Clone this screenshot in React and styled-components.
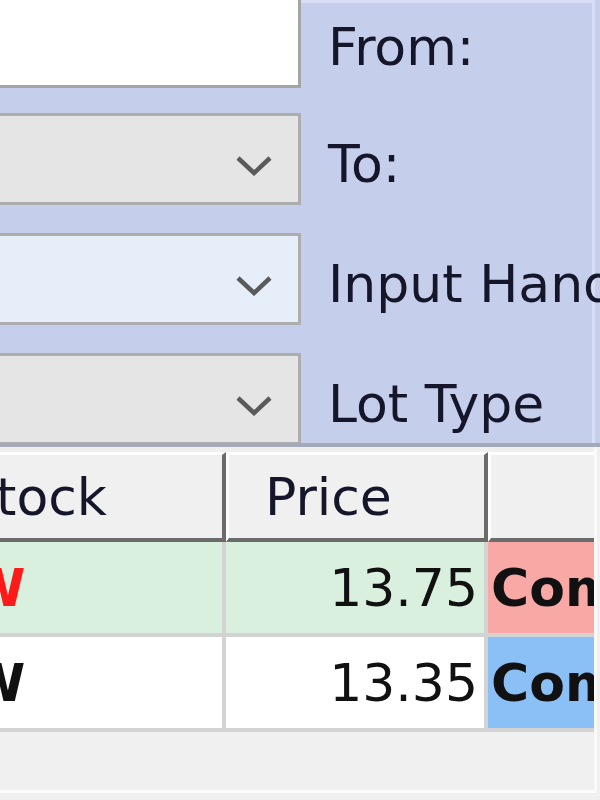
import React from "react"
import styled, { createGlobalStyle } from "styled-components"

const GlobalStyle = createGlobalStyle`
  html, body {
    margin: 0;
    padding: 0;
    background: #f0f0f0;
  }
  body {
    font-family: "DejaVu Sans", Tahoma, sans-serif;
  }
`

const Screen = styled.div`
  width: 600px;
  height: 800px;
  overflow: hidden;
  background: #f0f0f0;
`

const FilterPanel = styled.div`
  height: 443px;
  background: #c5cfec;
  border-bottom: 4px solid #a4a9ba;
  padding-right: 5px;
  overflow: hidden;
`

const FilterGroup = styled.div`
  height: 100%;
  box-sizing: border-box;
  border-top: 3px solid #d7def6;
  border-right: 3px solid #d7def6;
  display: flex;
  flex-direction: column;
  gap: 28px;
  & > :first-child {
    margin-top: -7px;
    margin-bottom: -3px;
  }
`

const FormRow = styled.div`
  display: flex;
  align-items: center;
  height: 92px;
  flex-shrink: 0;
`

const FieldBox = styled.div`
  box-sizing: border-box;
  width: 311px;
  height: 92px;
  margin-left: -10px;
  flex-shrink: 0;
  background: ${(p) => p.$bg || "#e5e5e5"};
  border: 3px solid ${(p) => p.$line || "#adadad"};
  display: flex;
  align-items: center;
  justify-content: flex-end;
  padding-right: 26px;
`

const Chevron = styled.svg`
  width: 36px;
  height: 20px;
  margin-top: 14px;
`

const FieldLabel = styled.div`
  margin-left: 27px;
  padding-top: 10px;
  font-size: 52px;
  color: #16162a;
  white-space: nowrap;
`

const GridView = styled.div`
  box-sizing: border-box;
  height: 346px;
  margin-right: 3px;
  padding-top: 5px;
  border-right: 3px solid #f9f9f9;
  border-bottom: 3px solid #fbfbfb;
  overflow: hidden;
`

const GridTable = styled.div`
  display: grid;
  grid-template-columns: 302px 262px 220px;
  margin-left: -76px;
  width: max-content;
`

const HeaderCell = styled.div`
  box-sizing: border-box;
  height: 90px;
  background: #f0f0f0;
  border-top: 3px solid #ffffff;
  border-left: 3px solid #ffffff;
  border-right: 4px solid #6b6b6b;
  border-bottom: 4px solid #6b6b6b;
  padding-left: 36px;
  display: flex;
  align-items: center;
  font-size: 52px;
  color: #16162a;
  white-space: nowrap;
`

const DataCell = styled.div`
  box-sizing: border-box;
  height: 95px;
  background: ${(p) => p.$bg || "#ffffff"};
  border-right: 4px solid #d3d3d3;
  border-bottom: 4px solid #d3d3d3;
  display: flex;
  align-items: center;
  justify-content: ${(p) => (p.$right ? "flex-end" : "flex-start")};
  padding: ${(p) => (p.$right ? "0 6px 0 0" : `0 0 0 ${p.$pad ?? 44}px`)};
  font-size: 52px;
  font-weight: ${(p) => (p.$bold ? 700 : 400)};
  color: ${(p) => p.$color || "#111111"};
  white-space: nowrap;
  overflow: hidden;
`

const fields = [
  { label: "From:", bg: "#ffffff", line: "#a5a5a5", combo: false },
  { label: "To:", bg: "#e5e5e5", combo: true },
  { label: "Input Handler:", bg: "#e6eefa", combo: true },
  { label: "Lot Type", bg: "#e5e5e5", combo: true },
]

const rows = [
  { stock: "W", stockColor: "#ff1a1a", price: "13.75", type: "Common", rowBg: "#d9f0de", typeBg: "#f8a9a6" },
  { stock: "W", stockColor: "#111111", price: "13.35", type: "Common", rowBg: "#ffffff", typeBg: "#8bc0f7" },
]

const App = () => (
  <Screen>
    <GlobalStyle />
    <FilterPanel>
      <FilterGroup>
        {fields.map((f) => (
          <FormRow key={f.label}>
            <FieldBox $bg={f.bg} $line={f.line}>
              {f.combo && (
                <Chevron viewBox="0 0 36 20">
                  <polyline points="2,2 18,17 34,2" fill="none" stroke="#5a5a5a" strokeWidth="4.5" />
                </Chevron>
              )}
            </FieldBox>
            <FieldLabel>{f.label}</FieldLabel>
          </FormRow>
        ))}
      </FilterGroup>
    </FilterPanel>
    <GridView>
      <GridTable>
        <HeaderCell>Stock</HeaderCell>
        <HeaderCell>Price</HeaderCell>
        <HeaderCell />
        {rows.map((r, i) => (
          <React.Fragment key={i}>
            <DataCell $bg={r.rowBg} $bold $color={r.stockColor}>{r.stock}</DataCell>
            <DataCell $bg={r.rowBg} $right>{r.price}</DataCell>
            <DataCell $bg={r.typeBg} $bold $pad={3}>{r.type}</DataCell>
          </React.Fragment>
        ))}
      </GridTable>
    </GridView>
  </Screen>
)

export default App
